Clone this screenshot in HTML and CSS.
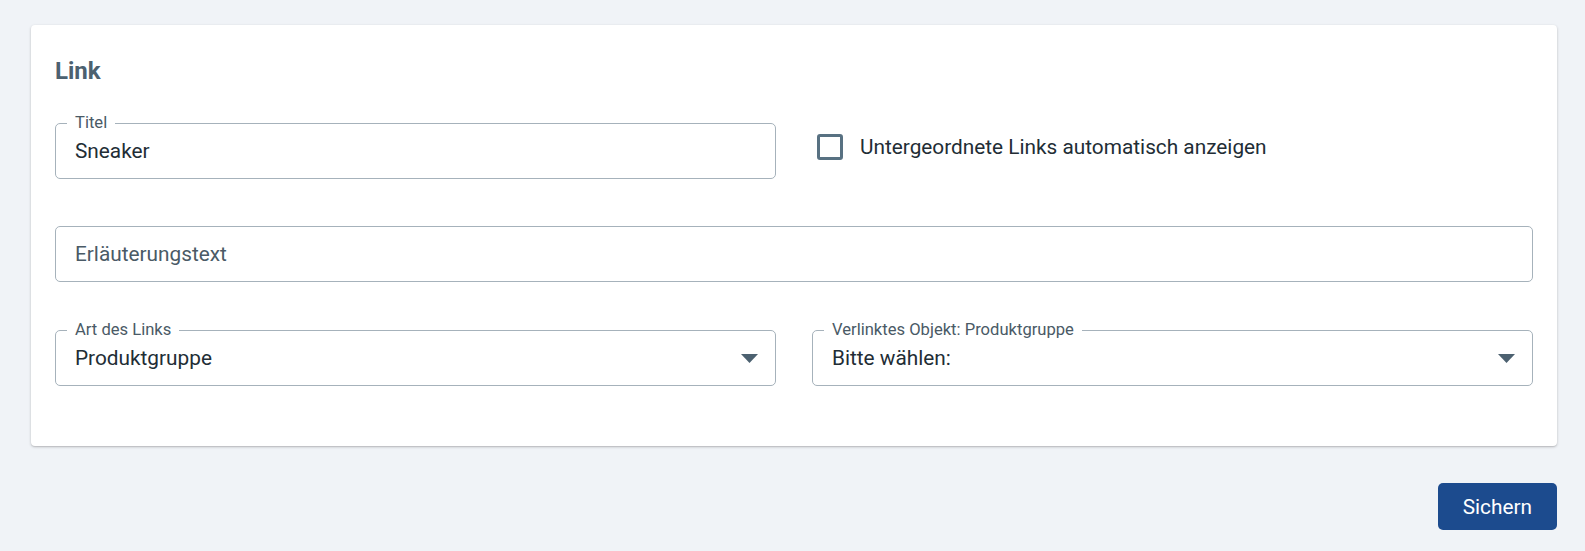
FILE: index.html
```html
<!DOCTYPE html>
<html lang="de">
<head>
  <meta charset="UTF-8" />
  <meta name="viewport" content="width=device-width, initial-scale=1" />
  <title>Link bearbeiten</title>
  <link rel="stylesheet" href="styles.css">
</head>
<body>
  <div class="card">
    <h2 class="card-title">Link</h2>

    <div class="row row-first">
      <div class="field">
        <span class="field-label">Titel</span>
        <input class="field-input" type="text" value="Sneaker" />
      </div>
      <label class="check">
        <span class="check-box"></span>
        <span class="check-text">Untergeordnete Links automatisch anzeigen</span>
      </label>
    </div>

    <div class="row row-full">
      <div class="field">
        <input class="field-input" type="text" placeholder="Erläuterungstext" />
      </div>
    </div>

    <div class="row row-last">
      <div class="field field-select">
        <span class="field-label">Art des Links</span>
        <span class="select-value">Produktgruppe</span>
        <svg class="select-arrow" width="17" height="9" viewBox="0 0 17 9"><polygon points="0,0 17,0 8.5,9" /></svg>
      </div>
      <div class="field field-select">
        <span class="field-label">Verlinktes Objekt: Produktgruppe</span>
        <span class="select-value">Bitte wählen:</span>
        <svg class="select-arrow" width="17" height="9" viewBox="0 0 17 9"><polygon points="0,0 17,0 8.5,9" /></svg>
      </div>
    </div>
  </div>

  <div class="actions">
    <button class="btn-primary">Sichern</button>
  </div>
</body>
</html>
```

FILE: styles.css
```css
* {
  box-sizing: border-box;
}

body {
  font-family: Roboto, "Liberation Sans", sans-serif;
  background: #f0f3f7;
  margin: 0;
  color: #222d35;
}

.card {
  margin: 25px 28px 0 31px;
  background: white;
  border-radius: 4px;
  box-shadow: 0 1px 3px rgba(0, 0, 0, 0.2), 0 1px 1px rgba(0, 0, 0, 0.08);
  padding: 32px 24px 60px;
}

.card-title {
  margin: 0;
  font-size: 24px;
  line-height: 28px;
  font-weight: 700;
  color: #4c6170;
}

.row {
  display: grid;
  grid-template-columns: 1fr 1fr;
  column-gap: 36px;
  margin-top: 47px;
}

.row-first {
  margin-top: 38px;
}

.row-last {
  margin-top: 48px;
}

.row-full {
  grid-template-columns: 1fr;
}

.field {
  position: relative;
  height: 56px;
  border: 1px solid #a6b2bb;
  border-radius: 5px;
  display: flex;
  align-items: center;
  padding: 0 17px 0 19px;
}

.field-label {
  position: absolute;
  top: -10px;
  left: 11px;
  padding: 0 8px;
  background: white;
  font-size: 16.6px;
  line-height: 18px;
  color: #4a5a66;
}

.field-input {
  width: 100%;
  border: none;
  outline: none;
  padding: 0;
  font-family: inherit;
  font-size: 20.8px;
  color: #222d35;
  background: transparent;
}

.field-input::placeholder {
  color: #4a5a66;
  opacity: 1;
}

.select-value {
  flex: 1;
  font-size: 20.8px;
  color: #222d35;
}

.select-arrow {
  fill: #4c6170;
}

.check {
  display: flex;
  align-items: center;
  gap: 17px;
  margin: 11px 0 0 5px;
  align-self: start;
  cursor: pointer;
}

.check-box {
  width: 26px;
  height: 26px;
  border: 3px solid #587182;
  border-radius: 3px;
}

.check-text {
  font-size: 20.8px;
  color: #222d35;
}

.actions {
  display: flex;
  justify-content: flex-end;
  margin: 37px 28px 0 0;
}

.btn-primary {
  height: 47px;
  padding: 0 25px;
  border: none;
  border-radius: 5px;
  background: #1c4b8e;
  color: white;
  font-family: inherit;
  font-size: 20.8px;
  cursor: pointer;
}

.btn-primary:hover {
  background: #163d75;
}
```
